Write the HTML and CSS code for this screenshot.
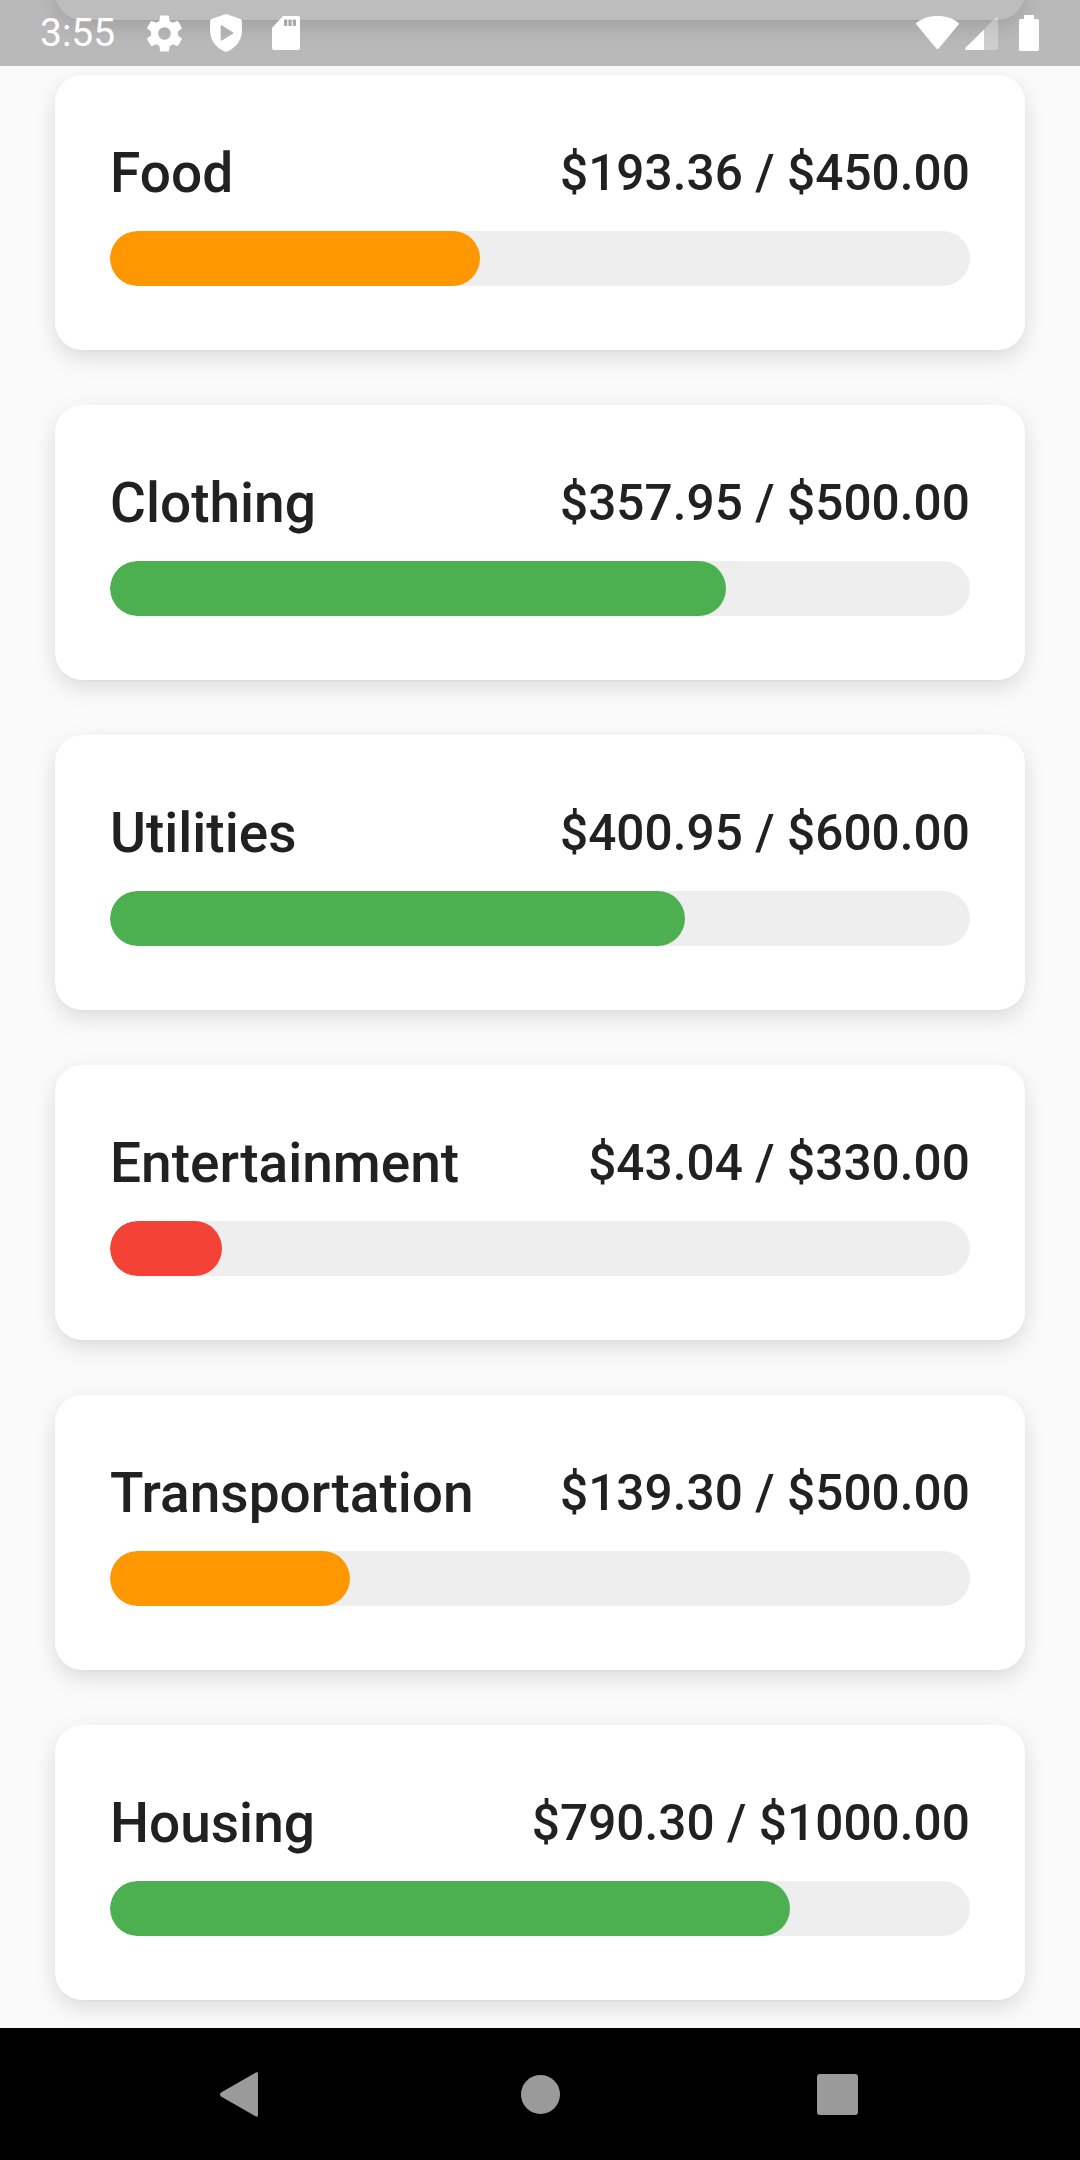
FILE: index.html
```html
<!DOCTYPE html>
<html lang="en">
<head>
    <meta charset="UTF-8">
    <meta name="viewport" content="width=device-width, initial-scale=1.0">
    <title>Budget</title>
    <link rel="stylesheet" href="styles.css">
</head>
<body>
    <div class="screen">
        <main class="content">
            <div class="budget-list">
                <!-- card scrolled away under the status bar -->
                <section class="budget-card"></section>

                <section class="budget-card">
                    <div class="budget-row">
                        <span class="budget-name">Food</span>
                        <span class="budget-amount">$193.36 / $450.00</span>
                    </div>
                    <div class="bar"><div class="bar-fill fill-orange" style="width: 42.97%"></div></div>
                </section>

                <section class="budget-card">
                    <div class="budget-row">
                        <span class="budget-name">Clothing</span>
                        <span class="budget-amount">$357.95 / $500.00</span>
                    </div>
                    <div class="bar"><div class="bar-fill fill-green" style="width: 71.59%"></div></div>
                </section>

                <section class="budget-card">
                    <div class="budget-row">
                        <span class="budget-name">Utilities</span>
                        <span class="budget-amount">$400.95 / $600.00</span>
                    </div>
                    <div class="bar"><div class="bar-fill fill-green" style="width: 66.83%"></div></div>
                </section>

                <section class="budget-card">
                    <div class="budget-row">
                        <span class="budget-name">Entertainment</span>
                        <span class="budget-amount">$43.04 / $330.00</span>
                    </div>
                    <div class="bar"><div class="bar-fill fill-red" style="width: 13.04%"></div></div>
                </section>

                <section class="budget-card">
                    <div class="budget-row">
                        <span class="budget-name">Transportation</span>
                        <span class="budget-amount">$139.30 / $500.00</span>
                    </div>
                    <div class="bar"><div class="bar-fill fill-orange" style="width: 27.86%"></div></div>
                </section>

                <section class="budget-card">
                    <div class="budget-row">
                        <span class="budget-name">Housing</span>
                        <span class="budget-amount">$790.30 / $1000.00</span>
                    </div>
                    <div class="bar"><div class="bar-fill fill-green" style="width: 79.03%"></div></div>
                </section>
            </div>
        </main>

        <div class="status-bar">
            <span class="status-time">3:55</span>
            <svg class="icon-gear" viewBox="0 0 24 24"><path d="M19.4 13c.04-.32.07-.65.07-1s-.03-.68-.07-1l2.1-1.65c.2-.15.25-.42.12-.64l-2-3.46c-.12-.22-.39-.3-.61-.22l-2.49 1c-.52-.4-1.08-.73-1.69-.98l-.38-2.65C14.46 2.18 14.25 2 14 2h-4c-.25 0-.46.18-.49.42l-.38 2.65c-.61.25-1.17.59-1.69.98l-2.49-1c-.23-.09-.49 0-.61.22l-2 3.46c-.13.22-.07.49.12.64L4.57 11c-.04.32-.07.66-.07 1s.03.68.07 1l-2.11 1.65c-.19.15-.24.42-.12.64l2 3.46c.12.22.39.3.61.22l2.49-1c.52.4 1.08.73 1.69.98l.38 2.65c.03.24.24.42.49.42h4c.25 0 .46-.18.49-.42l.38-2.65c.61-.25 1.17-.59 1.69-.98l2.49 1c.23.09.49 0 .61-.22l2-3.46c.12-.22.07-.49-.12-.64L19.4 13zM12 15.5c-1.93 0-3.5-1.57-3.5-3.5s1.57-3.5 3.5-3.5 3.5 1.57 3.5 3.5-1.57 3.5-3.5 3.5z"/></svg>
            <svg class="icon-shield" viewBox="0 0 31 37"><path fill-rule="evenodd" d="M15.5 0 29 4.6c1.2.4 2 1.4 2 2.600v9.300c0 9.200-6.200 16.900-15.500 20.500C6.200 33.400 0 25.700 0 16.500V7.200c0-1.200.8-2.200 2-2.600L15.500 0zM11.600 11.300c-.6-.4-1.300 0-1.300.7v13c0 .7.7 1.100 1.300.7l10.500-6.500c.6-.4.6-1.200 0-1.500l-10.500-6.400z"/></svg>
            <svg class="icon-sd" viewBox="0 0 28 34"><path fill-rule="evenodd" d="M11 0H26c1.100 0 2 .9 2 2v30c0 1.100-.9 2-2 2H2c-1.100 0-2-.9-2-2V12L11 0zM12 3.500v6.500h3.300V3.500H12zm4.400 0v6.500h3.300V3.500h-3.300zm4.400 0v6.500h3.200V3.500h-3.200z"/></svg>

            <span class="status-spacer"></span>

            <svg class="icon-wifi" viewBox="0 0 43 33"><path d="M21.500 0C13 0 5.800 2.700.6 6.700c-.6.5-.7 1.300-.2 1.900l19.700 23.700c.7.900 2.100.9 2.800 0L42.600 8.600c.5-.6.4-1.400-.2-1.900C37.200 2.700 30 0 21.500 0z"/></svg>
            <svg class="icon-signal" viewBox="0 0 33 33"><path class="signal-dim" d="M30.500.6c1-1 2.500-.4 2.500 1V31c0 1.100-.9 2-2 2H19V12.500L30.500.6z"/><path d="M19 12.500V33H1.500c-1.200 0-1.800-1.400-1-2.300L19 12.500z"/></svg>
            <svg class="icon-battery" viewBox="0 0 20 36"><path d="M6 0h8c.6 0 1 .4 1 1v3h3.500c.8 0 1.500.7 1.500 1.500V34.500c0 .8-.7 1.500-1.500 1.500H1.500C.7 36 0 35.300 0 34.500V5.500C0 4.700.7 4 1.500 4H5V1c0-.6.4-1 1-1z"/></svg>
        </div>

        <nav class="nav-bar">
            <svg class="nav-back" viewBox="0 0 38 45"><path d="M35.500.8c.9-1 2.500-.4 2.500.9v41.600c0 1.300-1.600 1.900-2.500.9L1 24.500c-1.300-1.200-1.300-2.800 0-4L35.500.8z"/></svg>
            <span class="nav-home"></span>
            <span class="nav-recent"></span>
        </nav>
    </div>
</body>
</html>
```

FILE: styles.css
```css
body {
    margin: 0;
    font-family: Roboto, "Liberation Sans", sans-serif;
}
.screen {
    position: relative;
    display: flex;
    flex-direction: column;
    width: 1080px;
    height: 2160px;
    overflow: hidden;
    background-color: #fafafa;
}
.content {
    flex: 1;
    min-height: 0;
    overflow: hidden;
}
.budget-list {
    display: flex;
    flex-direction: column;
    gap: 55px;
    margin-top: -255px;
    padding: 0 55px;
}
.budget-card {
    box-sizing: border-box;
    flex: none;
    height: 275px;
    padding: 66px 55px 0;
    border-radius: 27px;
    background-color: #fff;
    box-shadow: 0 8px 22px rgba(0, 0, 0, 0.12), 0 1px 2px rgba(0, 0, 0, 0.03);
}
.budget-row {
    display: flex;
    justify-content: space-between;
    align-items: center;
    height: 65px;
    margin-bottom: 25px;
    line-height: 65px;
    color: #212121;
}
.budget-name {
    font-size: 55px;
    font-weight: 500;
}
.budget-amount {
    font-size: 49.5px;
    font-weight: 500;
    letter-spacing: 0.06px;
}
.bar {
    height: 55px;
    border-radius: 28px;
    background-color: #eeeeee;
    overflow: hidden;
}
.bar-fill {
    height: 100%;
    border-radius: 28px;
}
.fill-orange {
    background-color: #ff9800;
}
.fill-green {
    background-color: #4caf50;
}
.fill-red {
    background-color: #f44336;
}

/* status bar lies over the scrolled list */
.status-bar {
    position: absolute;
    top: 0;
    left: 0;
    right: 0;
    display: flex;
    align-items: center;
    height: 66px;
    padding: 0 41px 0 40px;
    box-sizing: border-box;
    background-color: rgba(0, 0, 0, 0.26);
    color: #fff;
}
.status-bar svg {
    flex: none;
    fill: #fff;
}
.status-time {
    font-size: 39px;
    width: 100px;
}
.status-spacer {
    flex: 1;
}
.icon-gear {
    width: 43px;
    height: 43px;
    margin-left: 3px;
}
.icon-shield {
    width: 32px;
    height: 38px;
    margin-left: 24px;
}
.icon-sd {
    width: 28px;
    height: 34px;
    margin-left: 30px;
}
.icon-wifi {
    width: 43px;
    height: 33px;
    margin-bottom: 2px;
}
.icon-signal {
    width: 33px;
    height: 33px;
    margin-left: 6px;
}
.signal-dim {
    opacity: 0.3;
}
.icon-battery {
    width: 20px;
    height: 36px;
    margin-left: 21px;
}

.nav-bar {
    flex: none;
    display: flex;
    align-items: center;
    height: 132px;
    padding-left: 220px;
    background-color: #000;
}
.nav-back {
    width: 38px;
    height: 45px;
    fill: #9a9a9a;
}
.nav-home {
    width: 39px;
    height: 39px;
    margin-left: 263px;
    border-radius: 50%;
    background-color: #9a9a9a;
}
.nav-recent {
    width: 41px;
    height: 41px;
    margin-left: 257px;
    border-radius: 3px;
    background-color: #9a9a9a;
}
```
